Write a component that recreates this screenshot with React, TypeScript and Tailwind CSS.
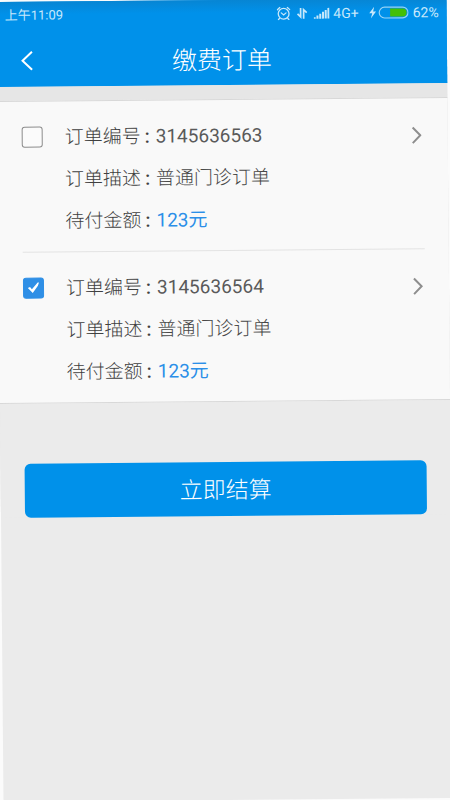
import React, { useState } from 'react';

type Order = {
  id: string;
  description: string;
  amount: number;
};

const orders: Order[] = [
  { id: '3145636563', description: '普通门诊订单', amount: 123 },
  { id: '3145636564', description: '普通门诊订单', amount: 123 },
];

const AlarmIcon = () => (
  <svg width="14" height="14" viewBox="0 0 14 14" fill="none" stroke="currentColor" strokeLinecap="round" aria-hidden="true">
    <circle cx="7" cy="7.3" r="5.4" strokeWidth="1.3" />
    <path d="M4.6 6.4 7 8.5l2.4-2.1" strokeWidth="1.2" />
    <path d="M.8 3.2 3.2 1M13.2 3.2 10.8 1M2.8 12l-1 1M11.2 12l1 1" strokeWidth="1.3" />
  </svg>
);

const DataIcon = () => (
  <svg width="11" height="12" viewBox="0 0 11 12" fill="none" stroke="currentColor" strokeWidth="1.7" aria-hidden="true">
    <path d="M4 .6v9L.9 6.6M7 11.4v-9l3.1 3" />
  </svg>
);

const SignalIcon = () => (
  <svg width="16" height="12" viewBox="0 0 16 12" fill="currentColor" aria-hidden="true">
    <path d="M0 10h2v1.5H0zM2.8 8.4h2v3.1h-2zM5.6 6.6h2v4.9h-2zM8.4 4.7h2v6.8h-2zM11.1 2.8h2v8.7h-2zM13.8.8h2v10.7h-2z" />
  </svg>
);

const BatteryIcon = () => (
  <svg width="40" height="14" viewBox="0 0 40 14" aria-hidden="true">
    <path d="M5.6 1 .6 7.6h3L2.2 12.8l5.2-7H4.5z" fill="currentColor" />
    <rect x="10.6" y="1.6" width="28.8" height="10.8" rx="5.4" fill="none" stroke="currentColor" strokeOpacity=".75" strokeWidth="1.2" />
    <path d="M21.5 3H34a4 4 0 0 1 0 8H21.5z" fill="#43bf06" />
  </svg>
);

const StatusBar = () => (
  <div className="flex h-7 items-center justify-between px-2 text-[#c8e8fb]">
    <span className="text-[13px] leading-5">上午11:09</span>
    <div className="flex items-center text-sm leading-5">
      <AlarmIcon />
      <span className="ml-1.5"><DataIcon /></span>
      <span className="ml-1.5"><SignalIcon /></span>
      <span className="ml-1">4G+</span>
      <span className="ml-2.5"><BatteryIcon /></span>
      <span className="ml-1">62%</span>
    </div>
  </div>
);

const Header = () => (
  <header className="bg-[#0091ea] bg-linear-to-b from-[#0785d3] to-[#0091ea] to-15%">
    <StatusBar />
    <div className="grid h-[57px] grid-cols-[40px_1fr_40px] items-center px-4 pt-1 text-white">
      <button type="button" aria-label="返回" className="flex h-10 items-center pl-2">
        <svg width="12" height="20" viewBox="0 0 12 20" fill="none" stroke="currentColor" strokeWidth="2" aria-hidden="true">
          <path d="M11 1 1.5 10 11 19" />
        </svg>
      </button>
      <h1 className="pt-1 text-center text-[25px] leading-8 font-light">缴费订单</h1>
    </div>
  </header>
);

type OrderItemProps = {
  order: Order;
  checked: boolean;
  onToggle: () => void;
};

const OrderItem = ({ order, checked, onToggle }: OrderItemProps) => {
  const rows = [
    { label: '订单编号', value: order.id, className: 'text-[#5a5a5a]' },
    { label: '订单描述', value: order.description, className: 'font-light text-[#484848]' },
    { label: '待付金额', value: `${order.amount}元`, className: 'text-[#2b8fe8]' },
  ];

  return (
    <li className="flex border-b border-[#e3e3e3] pt-[14px] pb-[9px] last:border-b-0">
      <label className="grid h-[42px] w-[21px] shrink-0 place-items-center">
        <input
          type="checkbox"
          aria-label={`选择订单 ${order.id}`}
          checked={checked}
          onChange={onToggle}
          className="peer col-start-1 row-start-1 size-[21px] appearance-none rounded-[3px] border border-[#8c8c8c] bg-[#fbfbfb] checked:border-[#2f8fe6] checked:bg-[#2f8fe6]"
        />
        <svg width="13" height="12" viewBox="0 0 13 12" fill="white" className="pointer-events-none invisible col-start-1 row-start-1 peer-checked:visible" aria-hidden="true">
          <path d="M.8 6.4 3 5.2l1.9 2.3L10.7.9l1.3.1-1.1 3.2-5.2 7.2z" />
        </svg>
      </label>
      <dl className="ml-[22px] flex-1 pt-px text-[19px]">
        {rows.map(({ label, value, className }) => (
          <div key={label} className="flex h-[42px] items-center leading-7">
            <dt className="w-[91px] font-light text-[#404040]">
              {label}
              <span className="ml-1 font-medium">:</span>
            </dt>
            <dd className={className}>{value}</dd>
          </div>
        ))}
      </dl>
      <a href={`#order-${order.id}`} aria-label={`查看订单 ${order.id}`} className="flex h-11 items-center pt-0.5 pr-0.5 text-[#8e8e8e]">
        <svg width="10" height="18" viewBox="0 0 10 18" fill="none" stroke="currentColor" strokeWidth="2" aria-hidden="true">
          <path d="M1 1.2 8.6 9 1 16.8" />
        </svg>
      </a>
    </li>
  );
};

const App = () => {
  const [selected, setSelected] = useState<string[]>(['3145636564']);

  const toggle = (id: string) => {
    setSelected((prev) => (prev.includes(id) ? prev.filter((item) => item !== id) : [...prev, id]));
  };

  return (
    <div className="min-h-screen overflow-hidden bg-[#fbfbfb] font-[Roboto,'Noto_Sans_CJK_SC',sans-serif]">
      {/* The whole page sits at a slight tilt on a white backdrop */}
      <div className="min-h-screen rotate-[-0.5deg] bg-[#ebebeb]">
        <Header />
        <main className="bg-[#e6e6e6] pt-[14px]">
          <ul className="border-y border-[#d8d8d8] bg-[#f9f9f9] px-6">
            {orders.map((order) => (
              <OrderItem
                key={order.id}
                order={order}
                checked={selected.includes(order.id)}
                onToggle={() => toggle(order.id)}
              />
            ))}
          </ul>
          <div className="bg-[#ebebeb] px-6 pt-[60px]">
            <button type="button" className="h-[54px] w-full rounded-md bg-[#0091ea] pt-1 text-[23px] leading-8 font-light text-white">
              立即结算
            </button>
          </div>
        </main>
      </div>
    </div>
  );
};

export default App;
